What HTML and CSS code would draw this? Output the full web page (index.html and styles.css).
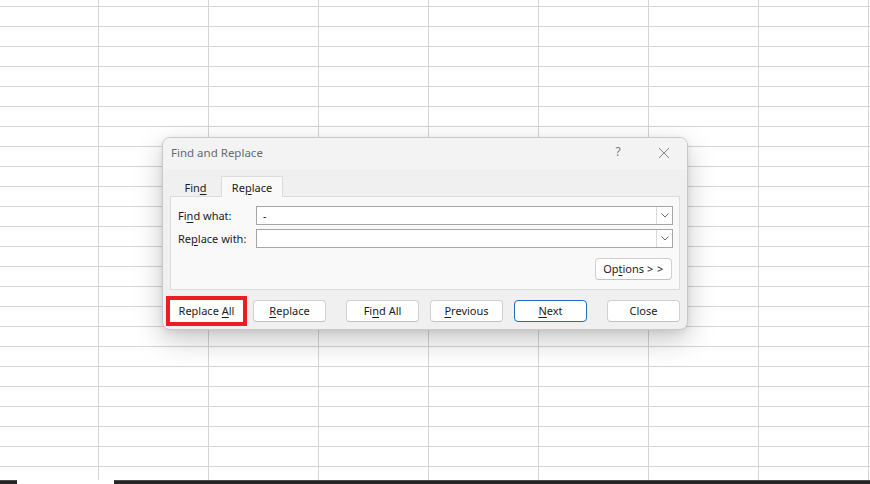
FILE: index.html
```html
<!DOCTYPE html>
<html lang="en">
<head>
<meta charset="utf-8">
<title>Find and Replace</title>
<link rel="stylesheet" href="styles.css">
</head>
<body>
<div class="sheet">
  <div class="dialog">
    <div class="titlebar">
      <span class="title">Find and Replace</span>
      <span class="help">?</span>
      <span class="close-x">
        <svg width="12" height="12" viewBox="0 0 12 12"><path d="M1 1 L11 11 M11 1 L1 11" stroke="#7a7a7a" stroke-width="0.9" fill="none"/></svg>
      </span>
    </div>
    <div class="body">
      <div class="tabs">
        <div class="tab"><span>Fin<u>d</u></span></div>
        <div class="tab tab-active"><span>Re<u>p</u>lace</span></div>
      </div>
      <div class="panel">
        <div class="row">
          <label class="label">Fi<u>n</u>d what:</label>
          <div class="combo">
            <span class="combo-text">-</span>
            <span class="combo-drop"><svg width="8" height="5" viewBox="0 0 8 5"><path d="M0.5 0.5 L4 4 L7.5 0.5" stroke="#5a5a5a" stroke-width="0.9" fill="none"/></svg></span>
          </div>
        </div>
        <div class="row">
          <label class="label">Re<u>p</u>lace with:</label>
          <div class="combo">
            <span class="combo-text"></span>
            <span class="combo-drop"><svg width="8" height="5" viewBox="0 0 8 5"><path d="M0.5 0.5 L4 4 L7.5 0.5" stroke="#5a5a5a" stroke-width="0.9" fill="none"/></svg></span>
          </div>
        </div>
        <div class="options-row">
          <button class="btn btn-options"><span>Op<u>t</u>ions <span class="gt">&gt; &gt;</span></span></button>
        </div>
      </div>
      <div class="buttons">
        <button class="btn btn-highlight"><span>Replace <u>A</u>ll</span></button>
        <button class="btn gap-10"><span><u>R</u>eplace</span></button>
        <button class="btn gap-20"><span>Fi<u>n</u>d All</span></button>
        <button class="btn gap-11"><span><u>P</u>revious</span></button>
        <button class="btn btn-default gap-11"><span><u>N</u>ext</span></button>
        <button class="btn gap-20"><span>Close</span></button>
      </div>
    </div>
  </div>
</div>
<div class="bottombar">
  <div class="bb-left"></div>
  <div class="bb-right"></div>
</div>
</body>
</html>
```
FILE: styles.css
```css
html, body {
  margin: 0;
  padding: 0;
  background: #ffffff;
}
body {
  width: 870px;
  height: 484px;
  overflow: hidden;
  font-family: "Noto Sans", "Open Sans", sans-serif;
  font-size: 11px;
  color: #1b1b1b;
}
.sheet {
  position: relative;
  height: 480px;
  background-color: #ffffff;
  background-image:
    linear-gradient(to bottom, #d4d4d4 1px, transparent 1px),
    linear-gradient(to right, #d4d4d4 1px, transparent 1px);
  background-size: 100% 20px, 110px 100%;
  background-position: 0 6px, 98px 0;
}
.bottombar {
  height: 4px;
  display: flex;
}
.bb-left {
  width: 17px;
  background: #262626;
  border-top: 1px solid #4a4a4a;
  box-sizing: border-box;
}
.bb-right {
  margin-left: 97px;
  flex: 1;
  background: #262626;
  border-top: 1px solid #4a4a4a;
  box-sizing: border-box;
}
.dialog {
  position: absolute;
  left: 162px;
  top: 137px;
  width: 526px;
  height: 193px;
  box-sizing: border-box;
  border: 1px solid #c9c9c9;
  border-radius: 8px;
  background: #f0f0f0;
  box-shadow: 0 10px 28px rgba(0, 0, 0, 0.22), 0 2px 6px rgba(0, 0, 0, 0.08);
  display: flex;
  flex-direction: column;
  overflow: hidden;
}
.titlebar {
  height: 31px;
  background: #f3f3f3;
  display: flex;
  align-items: center;
  padding-left: 8px;
  flex-shrink: 0;
}
.title {
  font-size: 11.5px;
  color: #6a6a6a;
  flex: 1;
  margin-top: -2px;
}
.help {
  font-size: 12px;
  color: #7a7a7a;
  width: 12px;
  text-align: center;
  margin-right: 34px;
  margin-top: -4px;
}
.close-x {
  display: flex;
  margin-right: 17px;
  margin-top: -2px;
}
.body {
  padding: 6px 7px 0 7px;
  display: flex;
  flex-direction: column;
}
.tabs {
  display: flex;
  align-items: flex-end;
  height: 21px;
}
.tab {
  width: 51px;
  height: 19px;
  display: flex;
  align-items: center;
  justify-content: center;
  box-sizing: border-box;
  padding-top: 1px;
}
.tab-active {
  width: 62px;
  height: 21px;
  background: #f9f9f9;
  border: 1px solid #dcdcdc;
  border-bottom: none;
  padding-top: 0;
  position: relative;
  top: 1px;
}
.panel {
  height: 94px;
  box-sizing: border-box;
  background: #f9f9f9;
  border: 1px solid #dcdcdc;
  padding: 9px 6px 0 7px;
  display: flex;
  flex-direction: column;
  gap: 4px;
}
.row {
  display: flex;
  align-items: center;
  height: 19px;
}
.label {
  width: 78px;
}
.combo {
  flex: 1;
  height: 19px;
  box-sizing: border-box;
  border: 1px solid #a6a6a6;
  background: #ffffff;
  display: flex;
  align-items: center;
}
.combo-text {
  flex: 1;
  padding-left: 6px;
  line-height: 17px;
}
.combo-drop {
  width: 16px;
  height: 17px;
  box-sizing: border-box;
  border-left: 1px solid #dadada;
  display: flex;
  align-items: center;
  justify-content: center;
}
.options-row {
  display: flex;
  justify-content: flex-end;
  margin-top: 6px;
  padding-right: 1px;
}
.btn {
  font-family: inherit;
  font-size: 11px;
  color: #1b1b1b;
  width: 73px;
  height: 22px;
  box-sizing: border-box;
  background: #ffffff;
  border: 1px solid #d0d0d0;
  border-bottom-color: #c2c2c2;
  border-radius: 4px;
  padding: 0 0 1px 0;
  display: flex;
  align-items: center;
  justify-content: center;
  line-height: 1;
}
.btn-options {
  width: 77px;
}
.gt {
  letter-spacing: 0.5px;
}
.buttons {
  display: flex;
  margin-top: 10px;
}
.btn-highlight {
  outline: 4px solid #ed1c24;
  outline-offset: 0;
  border-color: #ffffff;
  border-radius: 0;
}
.btn-default {
  border: 1px solid #1a6fc4;
}
.gap-10 { margin-left: 10px; }
.gap-11 { margin-left: 11px; }
.gap-20 { margin-left: 20px; }
u {
  text-decoration: underline;
  text-underline-offset: 2px;
}
```
